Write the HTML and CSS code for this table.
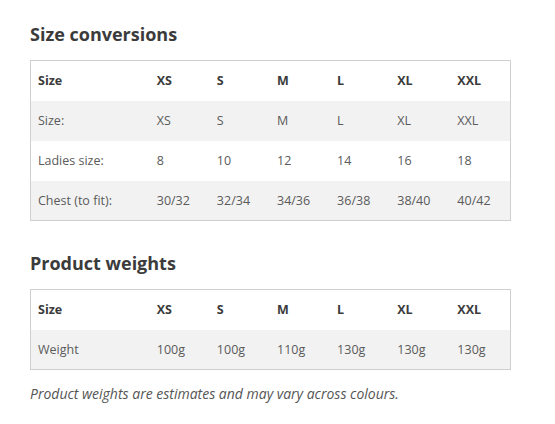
FILE: index.html
```html
<!DOCTYPE html>
<html>
<head>
<meta charset="utf-8">
<link rel="stylesheet" href="styles.css">
</head>
<body>
<main class="page">
  <h2 class="title">Size conversions</h2>
  <table class="chart">
    <thead>
      <tr><th class="label">Size</th><th>XS</th><th>S</th><th>M</th><th>L</th><th>XL</th><th>XXL</th></tr>
    </thead>
    <tbody>
      <tr class="alt"><td class="label">Size:</td><td>XS</td><td>S</td><td>M</td><td>L</td><td>XL</td><td>XXL</td></tr>
      <tr><td class="label">Ladies size:</td><td>8</td><td>10</td><td>12</td><td>14</td><td>16</td><td>18</td></tr>
      <tr class="alt"><td class="label">Chest (to fit):</td><td>30/32</td><td>32/34</td><td>34/36</td><td>36/38</td><td>38/40</td><td>40/42</td></tr>
    </tbody>
  </table>

  <h2 class="title second">Product weights</h2>
  <table class="chart">
    <thead>
      <tr><th class="label">Size</th><th>XS</th><th>S</th><th>M</th><th>L</th><th>XL</th><th>XXL</th></tr>
    </thead>
    <tbody>
      <tr class="alt"><td class="label">Weight</td><td>100g</td><td>100g</td><td>110g</td><td>130g</td><td>130g</td><td>130g</td></tr>
    </tbody>
  </table>
  <p class="note">Product weights are estimates and may vary across colours.</p>
</main>
</body>
</html>
```
FILE: styles.css
```css
html, body {
  margin: 0;
  padding: 0;
  background: #ffffff;
}
body {
  font-family: "Open Sans", "Liberation Sans", sans-serif;
  color: #555555;
}
.page {
  padding: 22px 0 0 30px;
}
.title {
  margin: 0 0 14px 0;
  font-size: 18px;
  line-height: 24px;
  font-weight: 700;
  color: #3b3b3b;
}
.title.second {
  margin-top: 30px;
}
.chart {
  border-collapse: collapse;
  border: 1px solid #cfcfcf;
  width: 481px;
  table-layout: fixed;
  font-size: 12.5px;
}
.chart th, .chart td {
  height: 40px;
  padding: 0 0 0 7px;
  text-align: left;
  width: 60px;
  box-sizing: border-box;
}
.chart th.label, .chart td.label {
  width: 119px;
}
.chart th {
  font-weight: 700;
  color: #3b3b3b;
}
.chart td {
  font-weight: 400;
  color: #5a5a5a;
}
.chart tr.alt {
  background: #f2f2f2;
}
.note {
  margin: 14px 0 0 0;
  font-size: 14px;
  line-height: 20px;
  font-style: italic;
  color: #555555;
}
```
